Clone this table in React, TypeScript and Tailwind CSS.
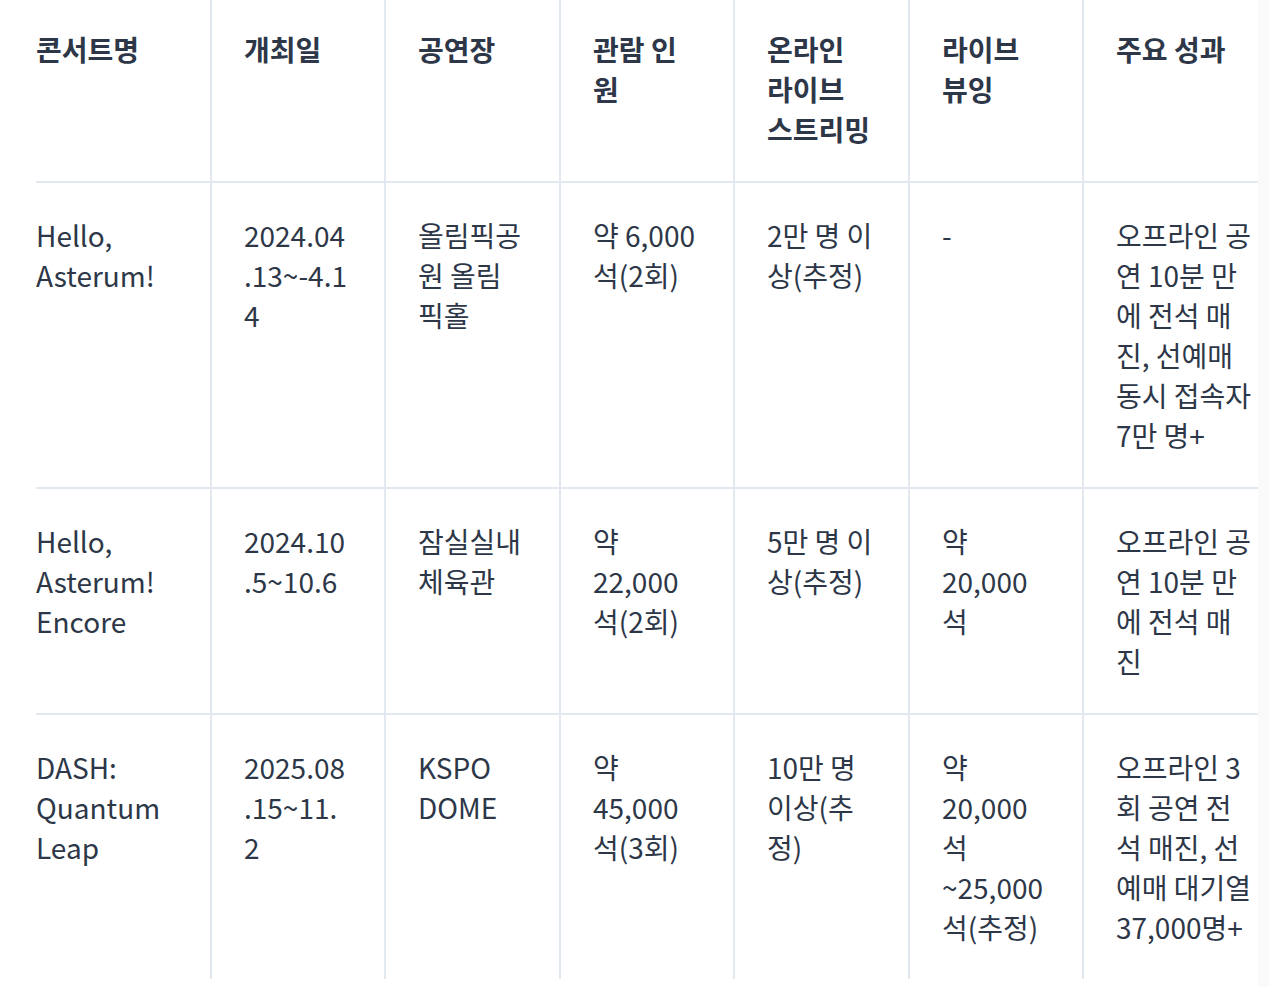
import React from "react";

const widths = [174, 174, 175, 174, 175, 174, 176];

const header: string[][] = [
  ["콘서트명"],
  ["개최일"],
  ["공연장"],
  ["관람 인", "원"],
  ["온라인", "라이브", "스트리밍"],
  ["라이브", "뷰잉"],
  ["주요 성과"],
];

const rows: string[][][] = [
  [
    ["Hello,", "Asterum!"],
    ["2024.04", ".13~-4.1", "4"],
    ["올림픽공", "원 올림", "픽홀"],
    ["약 6,000", "석(2회)"],
    ["2만 명 이", "상(추정)"],
    ["-"],
    ["오프라인 공", "연 10분 만", "에 전석 매", "진, 선예매", "동시 접속자", "7만 명+"],
  ],
  [
    ["Hello,", "Asterum!", "Encore"],
    ["2024.10", ".5~10.6"],
    ["잠실실내", "체육관"],
    ["약", "22,000", "석(2회)"],
    ["5만 명 이", "상(추정)"],
    ["약", "20,000", "석"],
    ["오프라인 공", "연 10분 만", "에 전석 매", "진"],
  ],
  [
    ["DASH:", "Quantum", "Leap"],
    ["2025.08", ".15~11.", "2"],
    ["KSPO", "DOME"],
    ["약", "45,000", "석(3회)"],
    ["10만 명", "이상(추", "정)"],
    ["약", "20,000", "석", "~25,000", "석(추정)"],
    ["오프라인 3", "회 공연 전", "석 매진, 선", "예매 대기열", "37,000명+"],
  ],
];

function Cell({ lines, idx, head }: { lines: string[]; idx: number; head?: boolean }) {
  return (
    <div
      style={{ width: widths[idx] }}
      className={
        "shrink-0 " +
        (idx === 0 ? "pl-0 " : "border-l-2 border-[#e2e8f0] pl-[32px] ") +
        (head ? "pt-[29px] pb-[32px] font-bold" : "pt-[32px] pb-[32px]")
      }
    >
      {lines.map((l, i) => (
        <div key={i} className="whitespace-nowrap">
          {l}
        </div>
      ))}
    </div>
  );
}

export default function App() {
  return (
    <div className="flex min-h-[987px] w-[1269px] bg-white font-['Noto_Sans_CJK_KR',sans-serif] text-[28px] leading-[40px] text-[#2d3748]">
      <div className="w-[1258px] shrink-0 overflow-hidden bg-white pl-[36px]">
        <div className="w-[1300px]">
          <div className="flex border-b-2 border-[#e2e8f0]">
            {header.map((c, i) => (
              <Cell key={i} lines={c} idx={i} head />
            ))}
          </div>
          {rows.map((r, ri) => (
            <div
              key={ri}
              className={"flex " + (ri < rows.length - 1 ? "border-b-2 border-[#e2e8f0]" : "")}
            >
              {r.map((c, i) => (
                <Cell key={i} lines={c} idx={i} />
              ))}
            </div>
          ))}
        </div>
      </div>
      <div className="flex-1 bg-[#fafafa]" />
    </div>
  );
}
